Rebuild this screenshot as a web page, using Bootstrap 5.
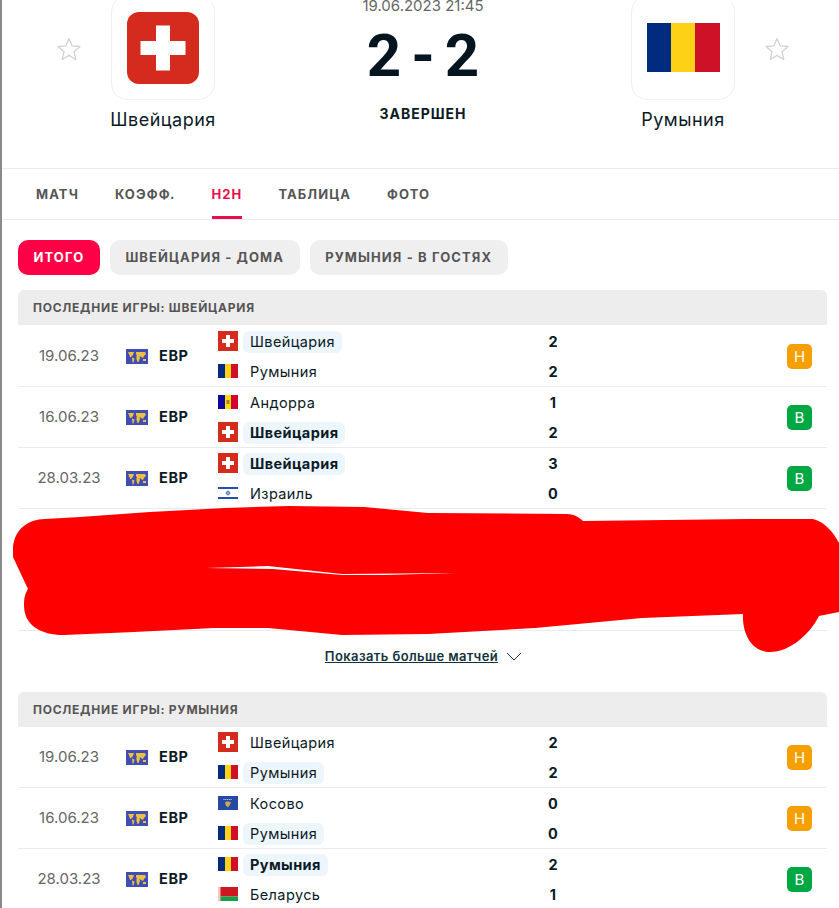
<!DOCTYPE html>
<html lang="ru">
<head>
    <meta charset="UTF-8">
    <meta name="viewport" content="width=device-width, initial-scale=1.0">
    <title>Швейцария - Румыния</title>
    <link href="https://cdn.jsdelivr.net/npm/bootstrap@5.3.0/dist/css/bootstrap.min.css" rel="stylesheet">
    <script src="https://cdn.jsdelivr.net/npm/bootstrap@5.3.0/dist/js/bootstrap.bundle.min.js"></script>
    <style>
        body {
            font-family: Inter, "Liberation Sans", sans-serif;
            color: #0b1a26;
            background: #fff;
            overflow-x: hidden;
        }
        .page-wrap {
            position: relative;
            border-left: 2px solid #8a8a8a;
            height: 908px;
            overflow: hidden;
        }
        .match-head {
            height: 173px;
            margin-top: -5px;
        }
        .fav-star {
            width: 24px;
            height: 24px;
            margin-top: 42px;
        }
        .fav-left { margin-left: 55px; margin-right: 30px; }
        .fav-right { margin-left: 30px; }
        .team-col { width: 104px; }
        .team-logo {
            width: 104px;
            height: 105px;
            border: 1px solid #f0f0f0;
            border-radius: 16px;
        }
        .team-title {
            font-size: 18px;
            letter-spacing: .5px;
            line-height: 22px;
            margin-top: 9px;
            white-space: nowrap;
        }
        .mid-col { width: 416px; }
        .match-date {
            font-size: 15px;
            line-height: 12px;
            padding-top: 5px;
            color: #666;
        }
        .match-score {
            font-family: Roboto, sans-serif;
            font-size: 60px;
            font-weight: 700;
            line-height: 56px;
            letter-spacing: 10px;
            padding-left: 10px;
            margin-top: 16px;
            color: #04151f;
        }
        .match-state {
            font-size: 14px;
            font-weight: 700;
            letter-spacing: 1px;
            line-height: 20px;
            margin-top: 20px;
        }
        .tab-bar {
            height: 52px;
            border-top: 1px solid #ebebeb;
            border-bottom: 1px solid #ebebeb;
            padding-left: 34px;
            gap: 36px;
        }
        .tab-link {
            font-size: 13px;
            font-weight: 700;
            letter-spacing: 1.1px;
            color: #555;
            line-height: 50px;
            text-decoration: none;
        }
        .tab-link.on {
            color: #e5114f;
            box-shadow: inset 0 -3px 0 #e5114f;
        }
        .pill-row {
            padding: 20px 0 15px 16px;
            gap: 10px;
        }
        .pill-btn {
            height: 35px;
            line-height: 35px;
            padding: 0 15.5px;
            border-radius: 10px;
            background: #efefef;
            color: #555;
            font-size: 13px;
            font-weight: 700;
            letter-spacing: 1.1px;
        }
        .pill-btn.on {
            background: #ff0046;
            color: #fff;
        }
        .block-title {
            margin: 0 12px 0 16px;
            height: 35px;
            line-height: 35px;
            padding-left: 15px;
            border-radius: 6px 6px 0 0;
            background: #ededed;
            color: #555;
            font-size: 12px;
            font-weight: 700;
            letter-spacing: .75px;
        }
        .block-first { margin-bottom: 1px; }
        .game-row {
            margin: 0 12px 0 16px;
            height: 61px;
            border-bottom: 1px solid #ebebeb;
        }
        .game-date {
            width: 102px;
            margin-right: 6px;
            text-align: center;
            font-size: 15px;
            color: #666;
        }
        .comp-flag {
            width: 22px;
            height: 15px;
            margin-right: 11px;
        }
        .comp-name {
            width: 59px;
            font-size: 14.5px;
            font-weight: 700;
            letter-spacing: .6px;
        }
        .team-line { height: 30px; }
        .mini-flag {
            width: 20px;
            height: 20px;
            margin-right: 5px;
        }
        .team-cell { width: 300px; }
        .team-chip {
            display: inline-block;
            padding: 0 7px;
            height: 22px;
            line-height: 22px;
            border-radius: 6px;
            font-size: 14.5px;
            letter-spacing: .4px;
        }
        .team-chip.mine { background: #eef6fd; }
        .team-chip.won { font-weight: 700; }
        .goal-cell {
            width: 20px;
            padding-top: 2px;
            text-align: center;
            font-size: 14.5px;
            font-weight: 700;
        }
        .res-box {
            width: 25px;
            height: 25px;
            line-height: 25px;
            margin-left: auto;
            margin-right: 15px;
            border-radius: 5px;
            color: #fff;
            text-align: center;
            font-size: 15px;
        }
        .res-draw { background: #f59f00; }
        .res-win { background: #00a843; }
        .hidden-rows { height: 122px; }
        .more-link {
            height: 61px;
            padding: 0 0 10px 6px;
            gap: 8px;
            color: #12323c;
            font-size: 13px;
            font-weight: 600;
            letter-spacing: .4px;
        }
        .more-link span { text-decoration: underline; }
        .scribble {
            position: absolute;
            left: -2px;
            top: 0;
            width: 839px;
            height: 908px;
            pointer-events: none;
        }
    </style>
</head>
<body>
    <svg width="0" height="0" class="position-absolute">
        <symbol id="f-che" viewBox="0 0 20 20">
            <rect width="20" height="20" fill="#d52b1e"/>
            <path d="M8 4h4v4h4v4h-4v4H8v-4H4V8h4z" fill="#fff"/>
        </symbol>
        <symbol id="f-rou" viewBox="0 0 20 20">
            <rect x="0" y="3" width="7" height="14" fill="#002b7f"/>
            <rect x="7" y="3" width="6" height="14" fill="#fcd116"/>
            <rect x="13" y="3" width="7" height="14" fill="#ce1126"/>
        </symbol>
        <symbol id="f-and" viewBox="0 0 20 20">
            <rect x="0" y="3" width="7" height="14" fill="#10069f"/>
            <rect x="7" y="3" width="6" height="14" fill="#fedd00"/>
            <rect x="13" y="3" width="7" height="14" fill="#d50032"/>
            <rect x="8.500" y="8" width="3" height="4" fill="#b07a2a"/>
        </symbol>
        <symbol id="f-isr" viewBox="0 0 20 20">
            <rect x="0" y="4" width="20" height="12" fill="#fff"/>
            <rect x="0" y="4" width="20" height="2" fill="#1f4fb0"/>
            <rect x="0" y="14" width="20" height="2" fill="#1f4fb0"/>
            <path d="M10 7.600l2 3.400h-4zM10 12.400l-2-3.400h4z" fill="none" stroke="#1f4fb0" stroke-width=".6"/>
        </symbol>
        <symbol id="f-kos" viewBox="0 0 20 20">
            <rect x="0" y="3" width="20" height="14" fill="#244aa5"/>
            <path d="M8 8.500h3l2 1-1 2-2 3-2-2-1-2z" fill="#d0a650"/>
            <path d="M5.500 6.500h9" stroke="#fff" stroke-width=".8" stroke-dasharray="1 .8"/>
        </symbol>
        <symbol id="f-blr" viewBox="0 0 20 20">
            <rect x="0" y="3" width="20" height="9.500" fill="#ce1720"/>
            <rect x="0" y="12.500" width="20" height="4.500" fill="#17a04a"/>
            <rect x="0" y="3" width="2.500" height="14" fill="#f0c8c4"/>
        </symbol>
        <symbol id="f-eur" viewBox="0 0 22 15">
            <rect width="22" height="15" fill="#3f4db5"/>
            <path d="M2 3h6l-1 3-2 2H4L3 5zM6 8.500l2.500 1-1 4h-1zM10 3h9l1 2-2 2-1 2-2-1-1-1h-3l-1-2zM10.500 7h3l.5 2-1.500 4h-1l-1-3zM17 10h3v2h-3z" fill="#eec041"/>
        </symbol>
        <symbol id="star-line" viewBox="0 0 24 24">
            <path d="M12 1.500l3.100 7.300 7.900.700-6 5.200 1.800 7.800-6.800-4.100-6.800 4.100 1.800-7.800-6-5.200 7.900-.700z" fill="none" stroke="#d2d2d2" stroke-width="1.300" stroke-linejoin="round"/>
        </symbol>
    </svg>

    <div class="page-wrap">
        <div class="match-head d-flex align-items-start">
            <svg class="fav-star fav-left flex-shrink-0"><use href="#star-line"/></svg>
            <div class="team-col flex-shrink-0 d-flex flex-column align-items-center">
                <div class="team-logo d-flex align-items-center justify-content-center">
                    <svg width="72" height="72" viewBox="0 0 72 72">
                        <rect width="72" height="72" rx="12" fill="#d52b1e"/>
                        <path d="M29 13.500h14V29h15.500v14H43v15.500H29V43H13.500V29H29z" fill="#fff"/>
                    </svg>
                </div>
                <div class="team-title">Швейцария</div>
            </div>
            <div class="mid-col flex-shrink-0 text-center">
                <div class="match-date">19.06.2023 21:45</div>
                <div class="match-score">2-2</div>
                <div class="match-state">ЗАВЕРШЕН</div>
            </div>
            <div class="team-col flex-shrink-0 d-flex flex-column align-items-center">
                <div class="team-logo d-flex align-items-center justify-content-center">
                    <svg width="73" height="49" viewBox="0 0 73 49">
                        <rect width="25" height="49" fill="#002b7f"/>
                        <rect x="24" width="25" height="49" fill="#fcd116"/>
                        <rect x="48" width="25" height="49" fill="#ce1126"/>
                    </svg>
                </div>
                <div class="team-title">Румыния</div>
            </div>
            <svg class="fav-star fav-right flex-shrink-0"><use href="#star-line"/></svg>
        </div>

        <div class="tab-bar d-flex">
            <a class="tab-link" href="#">МАТЧ</a>
            <a class="tab-link" href="#">КОЭФФ.</a>
            <a class="tab-link on" href="#">H2H</a>
            <a class="tab-link" href="#">ТАБЛИЦА</a>
            <a class="tab-link" href="#">ФОТО</a>
        </div>

        <div class="pill-row d-flex">
            <div class="pill-btn on">ИТОГО</div>
            <div class="pill-btn">ШВЕЙЦАРИЯ - ДОМА</div>
            <div class="pill-btn">РУМЫНИЯ - В ГОСТЯХ</div>
        </div>

        <div class="block-title block-first">ПОСЛЕДНИЕ ИГРЫ: ШВЕЙЦАРИЯ</div>

        <div class="game-row d-flex align-items-center">
            <div class="game-date">19.06.23</div>
            <svg class="comp-flag"><use href="#f-eur"/></svg>
            <div class="comp-name">ЕВР</div>
            <div>
                <div class="team-line d-flex align-items-center">
                    <svg class="mini-flag"><use href="#f-che"/></svg>
                    <div class="team-cell"><span class="team-chip mine">Швейцария</span></div>
                    <div class="goal-cell">2</div>
                </div>
                <div class="team-line d-flex align-items-center">
                    <svg class="mini-flag"><use href="#f-rou"/></svg>
                    <div class="team-cell"><span class="team-chip">Румыния</span></div>
                    <div class="goal-cell">2</div>
                </div>
            </div>
            <div class="res-box res-draw">Н</div>
        </div>
        <div class="game-row d-flex align-items-center">
            <div class="game-date">16.06.23</div>
            <svg class="comp-flag"><use href="#f-eur"/></svg>
            <div class="comp-name">ЕВР</div>
            <div>
                <div class="team-line d-flex align-items-center">
                    <svg class="mini-flag"><use href="#f-and"/></svg>
                    <div class="team-cell"><span class="team-chip">Андорра</span></div>
                    <div class="goal-cell">1</div>
                </div>
                <div class="team-line d-flex align-items-center">
                    <svg class="mini-flag"><use href="#f-che"/></svg>
                    <div class="team-cell"><span class="team-chip mine won">Швейцария</span></div>
                    <div class="goal-cell">2</div>
                </div>
            </div>
            <div class="res-box res-win">В</div>
        </div>
        <div class="game-row d-flex align-items-center">
            <div class="game-date">28.03.23</div>
            <svg class="comp-flag"><use href="#f-eur"/></svg>
            <div class="comp-name">ЕВР</div>
            <div>
                <div class="team-line d-flex align-items-center">
                    <svg class="mini-flag"><use href="#f-che"/></svg>
                    <div class="team-cell"><span class="team-chip mine won">Швейцария</span></div>
                    <div class="goal-cell">3</div>
                </div>
                <div class="team-line d-flex align-items-center">
                    <svg class="mini-flag"><use href="#f-isr"/></svg>
                    <div class="team-cell"><span class="team-chip">Израиль</span></div>
                    <div class="goal-cell">0</div>
                </div>
            </div>
            <div class="res-box res-win">В</div>
        </div>
        <div class="game-row hidden-rows"></div>

        <div class="more-link d-flex align-items-center justify-content-center">
            <span>Показать больше матчей</span>
            <svg width="16" height="9" viewBox="0 0 16 9"><path d="M1 1l7 7 7-7" fill="none" stroke="#12323c" stroke-width="1"/></svg>
        </div>

        <div class="block-title">ПОСЛЕДНИЕ ИГРЫ: РУМЫНИЯ</div>

        <div class="game-row d-flex align-items-center">
            <div class="game-date">19.06.23</div>
            <svg class="comp-flag"><use href="#f-eur"/></svg>
            <div class="comp-name">ЕВР</div>
            <div>
                <div class="team-line d-flex align-items-center">
                    <svg class="mini-flag"><use href="#f-che"/></svg>
                    <div class="team-cell"><span class="team-chip">Швейцария</span></div>
                    <div class="goal-cell">2</div>
                </div>
                <div class="team-line d-flex align-items-center">
                    <svg class="mini-flag"><use href="#f-rou"/></svg>
                    <div class="team-cell"><span class="team-chip mine">Румыния</span></div>
                    <div class="goal-cell">2</div>
                </div>
            </div>
            <div class="res-box res-draw">Н</div>
        </div>
        <div class="game-row d-flex align-items-center">
            <div class="game-date">16.06.23</div>
            <svg class="comp-flag"><use href="#f-eur"/></svg>
            <div class="comp-name">ЕВР</div>
            <div>
                <div class="team-line d-flex align-items-center">
                    <svg class="mini-flag"><use href="#f-kos"/></svg>
                    <div class="team-cell"><span class="team-chip">Косово</span></div>
                    <div class="goal-cell">0</div>
                </div>
                <div class="team-line d-flex align-items-center">
                    <svg class="mini-flag"><use href="#f-rou"/></svg>
                    <div class="team-cell"><span class="team-chip mine">Румыния</span></div>
                    <div class="goal-cell">0</div>
                </div>
            </div>
            <div class="res-box res-draw">Н</div>
        </div>
        <div class="game-row d-flex align-items-center">
            <div class="game-date">28.03.23</div>
            <svg class="comp-flag"><use href="#f-eur"/></svg>
            <div class="comp-name">ЕВР</div>
            <div>
                <div class="team-line d-flex align-items-center">
                    <svg class="mini-flag"><use href="#f-rou"/></svg>
                    <div class="team-cell"><span class="team-chip mine won">Румыния</span></div>
                    <div class="goal-cell">2</div>
                </div>
                <div class="team-line d-flex align-items-center">
                    <svg class="mini-flag"><use href="#f-blr"/></svg>
                    <div class="team-cell"><span class="team-chip">Беларусь</span></div>
                    <div class="goal-cell">1</div>
                </div>
            </div>
            <div class="res-box res-win">В</div>
        </div>

        <!-- red marker scribble lying over the hidden rows -->
        <svg class="scribble" viewBox="0 0 839 908">
            <path fill="#fe0000" fill-rule="evenodd" d="M13 550C13 530 28 519 45 519L80 517 150 512 225 508 289 506 364 507 428 513 567 514C575 514 580 518 583 521L749 519 813 519C825 522 834 533 839 543V612L819 616C810 634 790 652 770 652C752 652 742 634 743 614L642 618 535 628 428 634 342 635 268 628 214 628 134 632 64 635C40 635 24 625 24 605C24 590 30 590 27 587L13 557ZM206 568L268 566 342 574 455 573 385 575 342 575 273 569Z"/>
        </svg>
    </div>
</body>
</html>
